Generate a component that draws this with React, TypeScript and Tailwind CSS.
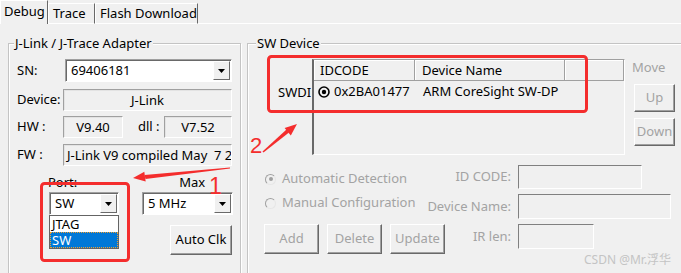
import React from "react";

const ui = "font-['Noto_Sans','Noto_Sans_CJK_SC',sans-serif]";

const DropArrow = () => (
  <div className="w-[17px] my-[1px] mr-[1px] bg-[#f0f0f0] border border-t-white border-l-white border-r-[#696969] border-b-[#696969] flex items-center justify-center">
    <svg width="7" height="4" viewBox="0 0 7 4">
      <polygon points="0,0 7,0 3.5,4" fill="#000" />
    </svg>
  </div>
);

const Combo = ({ value, className }: { value: string; className: string }) => (
  <div
    className={`flex h-[23px] bg-white border border-t-[#a0a0a0] border-l-[#a0a0a0] border-r-white border-b-white shadow-[inset_1px_1px_0_#696969] ${className}`}
  >
    <span className="flex-1 pl-[5px] leading-[21px] whitespace-nowrap overflow-hidden">{value}</span>
    <DropArrow />
  </div>
);

const Field = ({ value, className }: { value: string; className: string }) => (
  <div
    className={`h-[22px] border border-t-[#a0a0a0] border-l-[#a0a0a0] border-r-white border-b-white shadow-[inset_1px_1px_0_#e3e3e3] leading-[20px] whitespace-nowrap overflow-hidden ${className}`}
  >
    {value}
  </div>
);

const DisabledInput = ({ className }: { className: string }) => (
  <div className={`border border-t-[#808080] border-l-[#808080] border-r-white border-b-white ${className}`} />
);

const Button = ({ label, className, disabled }: { label: string; className: string; disabled?: boolean }) => (
  <div
    className={`flex items-center justify-center border border-t-white border-l-white border-r-[#696969] border-b-[#696969] shadow-[inset_-1px_-1px_0_#a0a0a0] ${
      disabled ? "text-[#a3a3a3]" : "text-black"
    } ${className}`}
  >
    {label}
  </div>
);

const Radio = ({ checked, label }: { checked?: boolean; label: string }) => (
  <div className="flex items-center h-[14px]">
    <div className="w-[11px] h-[11px] rounded-full border border-[#a0a0a0] border-b-[#e6e6e6] border-r-[#e6e6e6] flex items-center justify-center ml-[1px]">
      {checked && <div className="w-[4px] h-[4px] rounded-full bg-[#a0a0a0]" />}
    </div>
    <span className="ml-[6px] text-[#a3a3a3]">{label}</span>
  </div>
);

const Tab = ({ label, active, className }: { label: string; active?: boolean; className: string }) => (
  <div
    className={`flex items-center whitespace-nowrap border-l border-t border-r border-t-white border-l-white border-r-[#696969] ${
      active ? "h-[24px] pb-[2px]" : "h-[21px] border-b border-b-white"
    } ${className}`}
  >
    {label}
  </div>
);

export default function App() {
  return (
    <div className={`relative w-[681px] h-[273px] overflow-hidden bg-[#f0f0f0] text-[13px] text-black ${ui}`}>
      {/* tabs */}
      <div className="flex items-end h-[24px]">
        <Tab label="Debug" active className="w-[48px] pl-[3px]" />
        <Tab label="Trace" className="w-[47px] pl-[4px]" />
        <Tab label="Flash Download" className="w-[103px] pl-[4px]" />
        <div className="flex-1 border-b border-white" />
      </div>

      <div className="flex items-start">
        {/* left group */}
        <div className="ml-[8px] mt-[19px] w-[233px] h-[260px] shrink-0 border border-[#c4c4c4] shadow-[inset_1px_1px_0_#fff,1px_1px_0_#fff]">
          <div className="w-fit -mt-[9px] ml-[5px] px-[1px] h-[16px] leading-[16px] bg-[#f0f0f0]">
            J-Link / J-Trace Adapter
          </div>

          <div className="flex items-center h-[23px] mt-[8px] pl-[8px]">
            <span className="w-[48px]">SN:</span>
            <Combo value="69406181" className="w-[167px]" />
          </div>

          <div className="flex items-center h-[22px] mt-[7px] pl-[8px]">
            <span className="w-[46px]">Device:</span>
            <Field value="J-Link" className="w-[169px] text-center" />
          </div>

          <div className="flex items-center h-[22px] mt-[5px] pl-[8px]">
            <span className="w-[46px]">HW :</span>
            <Field value="V9.40" className="w-[60px] text-center" />
            <span className="ml-[15px] w-[26px]">dll :</span>
            <Field value="V7.52" className="w-[68px] text-center" />
          </div>

          <div className="flex items-center h-[22px] mt-[6px] pl-[8px]">
            <span className="w-[46px]">FW :</span>
            <Field value={"J-Link V9 compiled May \u00a07 2018"} className="w-[169px] pl-[3px]" />
          </div>

          <div className="flex h-[14px] mt-[9px] leading-[14px]">
            <span className="ml-[39px]">Port:</span>
            <span className="ml-[102px]">Max</span>
          </div>

          <div className="flex mt-[3px]">
            <div className="relative ml-[40px]">
              <Combo value="SW" className="w-[70px]" />
              <div className="absolute left-0 top-full w-[70px] border border-[#646464] bg-white leading-[16px]">
                <div className="h-[16px] pl-[2px]">JTAG</div>
                <div className="h-[16px] pl-[2px] bg-[#0078d7] text-white outline-1 outline-dotted outline-[#f0a030] -outline-offset-1">
                  SW
                </div>
              </div>
            </div>
            <Combo value="5 MHz" className="ml-[23px] w-[91px]" />
          </div>

          <Button label="Auto Clk" className="ml-[161px] mt-[10px] w-[62px] h-[30px]" />
        </div>

        {/* right group */}
        <div className="ml-[6px] mt-[19px] w-[445px] h-[260px] shrink-0 border border-[#c4c4c4] shadow-[inset_1px_1px_0_#fff,1px_1px_0_#fff]">
          <div className="w-fit -mt-[9px] ml-[8px] px-[1px] h-[16px] leading-[16px] bg-[#f0f0f0]">SW Device</div>

          <div className="flex mt-[8px]">
            <div className="ml-[29px] w-[35px] pl-[1px] pt-[23px]">
              <div className="w-[33px] overflow-hidden h-[21px] leading-[21px] whitespace-nowrap">SWDIO</div>
            </div>
            <div className="w-[313px] h-[96px] border-t border-t-[#a0a0a0] border-l-2 border-l-[#696969] border-r border-r-white border-b border-b-white">
              <div className="flex h-[21px] leading-[20px]">
                <div className="w-[101px] pl-[6px] border-r border-b border-r-[#a0a0a0] border-b-[#a0a0a0] shadow-[inset_1px_1px_0_#fff]">
                  IDCODE
                </div>
                <div className="w-[150px] pl-[7px] border-r border-b border-r-[#a0a0a0] border-b-[#a0a0a0] shadow-[inset_1px_1px_0_#fff]">
                  Device Name
                </div>
                <div className="w-[59px] border-r border-b border-r-[#a0a0a0] border-b-[#a0a0a0] shadow-[inset_1px_1px_0_#fff]" />
              </div>
              <div className="flex h-[22px] items-center">
                <div className="w-[102px] flex items-center pl-[4px]">
                  <svg width="12" height="12" viewBox="0 0 12 12">
                    <circle cx="6" cy="6" r="5" fill="none" stroke="#000" strokeWidth="1.6" />
                    <circle cx="6" cy="6" r="2.2" fill="#000" />
                  </svg>
                  <span className="ml-[4px]">0x2BA01477</span>
                </div>
                <div className="pl-[7px] whitespace-nowrap">ARM CoreSight SW-DP</div>
              </div>
            </div>
            <div className="ml-[7px] w-[45px]">
              <div className="mt-[1px] leading-[14px] text-[#a3a3a3]">Move</div>
              <Button label="Up" disabled className="ml-[2px] mt-[10px] w-[41px] h-[28px]" />
              <Button label="Down" disabled className="ml-[2px] mt-[6px] w-[41px] h-[28px]" />
            </div>
          </div>

          <div className="flex mt-[10px] ml-[16px]">
            <div className="w-[181px] shrink-0">
              <div className="mt-[7px]">
                <Radio checked label="Automatic Detection" />
              </div>
              <div className="mt-[10px]">
                <Radio label="Manual Configuration" />
              </div>
              <div className="flex gap-[8px] mt-[14px]">
                <Button label="Add" disabled className="w-[55px] h-[30px]" />
                <Button label="Delete" disabled className="w-[55px] h-[30px]" />
                <Button label="Update" disabled className="w-[55px] h-[30px]" />
              </div>
            </div>
            <div className="text-[#a3a3a3]">
              <div className="flex items-center h-[24px]">
                <div className="w-[66px] flex justify-end whitespace-nowrap">ID CODE:</div>
                <DisabledInput className="ml-[7px] w-[124px] h-[24px]" />
              </div>
              <div className="flex items-center h-[25px] mt-[5px]">
                <div className="w-[66px] flex justify-end whitespace-nowrap">Device Name:</div>
                <DisabledInput className="ml-[7px] w-[153px] h-[25px]" />
              </div>
              <div className="flex items-center h-[25px] mt-[5px]">
                <div className="w-[66px] flex justify-end whitespace-nowrap">IR len:</div>
                <DisabledInput className="ml-[7px] w-[76px] h-[25px]" />
              </div>
            </div>
          </div>
        </div>
      </div>

      {/* watermark */}
      <span className="absolute left-[584px] top-[251px] text-[12px] text-[#c4c4c4] whitespace-nowrap">
        CSDN @Mr.浮华
      </span>

      {/* red annotations */}
      <svg className="absolute left-0 top-0 pointer-events-none" width="681" height="273" viewBox="0 0 681 273">
        <rect x="41.5" y="183.5" width="87" height="77" rx="3" fill="none" stroke="#f42d2d" strokeWidth="3" />
        <rect x="268.5" y="56.5" width="318" height="55" rx="3" fill="none" stroke="#f42d2d" strokeWidth="3" />
        <polygon points="230,167.5 230,168.5 145.5,179 144.5,175" fill="#f42d2d" />
        <polygon points="133,178 144.3,171.8 145.7,181.6" fill="#f42d2d" />
        <polygon points="262.5,151.5 263.5,152.5 289,132.5 286.5,129.5" fill="#f42d2d" />
        <polygon points="297,124 284.6,128 290.8,135.4" fill="#f42d2d" />
      </svg>
      <span className="absolute left-[209px] top-[172px] text-[23px] leading-[28px] font-light text-[#f42d2d] font-['Liberation_Sans',sans-serif]">
        1
      </span>
      <span className="absolute left-[250px] top-[133px] text-[22px] leading-[26px] font-light text-[#f42d2d] font-['Liberation_Sans',sans-serif]">
        2
      </span>
    </div>
  );
}
